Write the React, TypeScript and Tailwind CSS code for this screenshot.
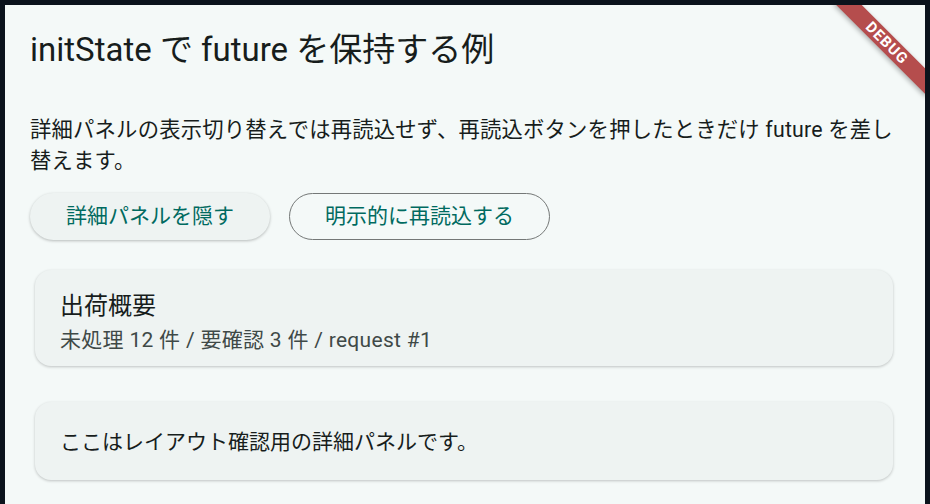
export default function App() {
  return (
    <div className="h-[504px] w-[930px] overflow-hidden bg-[#0b131c] px-[5px] pt-[5px] font-['Roboto','Noto_Sans_CJK_JP',sans-serif]">
      <div className="relative h-full overflow-hidden bg-[#f4f9f8] px-[25px] pt-[25px] text-[#171d1c]">
        <h1 className="text-[33px] leading-[40px]">initState で future を保持する例</h1>

        <p className="mt-[44px] text-[21.33px] leading-[31px] tracking-[0.2px]">
          詳細パネルの表示切り替えでは再読込せず、再読込ボタンを押したときだけ future を差し替えます。
        </p>

        <div className="mt-[17px] flex gap-[19px]">
          <button className="h-[47px] w-[240px] rounded-full bg-[#eef3f2] text-[21px] text-[#006a60] shadow-[0_1px_3px_rgba(0,0,0,0.25)]">
            詳細パネルを隠す
          </button>
          <button className="h-[47px] w-[261px] rounded-full border border-[#747877] text-[21px] text-[#006a60]">
            明示的に再読込する
          </button>
        </div>

        <div className="mt-[30px] ml-[5px] mr-[7px] rounded-2xl bg-[#eef3f2] px-[25px] pt-[19px] pb-[9px] shadow-[0_1px_3px_rgba(0,0,0,0.22)]">
          <div className="text-[24px] leading-[34px]">出荷概要</div>
          <div className="text-[21px] leading-[34px] tracking-[0.3px] text-[#3f4947]">未処理 12 件 / 要確認 3 件 / request #1</div>
        </div>

        <div className="mt-[36px] ml-[5px] mr-[7px] rounded-2xl bg-[#eef3f2] px-[25px] pt-[25px] pb-[23px] shadow-[0_1px_3px_rgba(0,0,0,0.22)]">
          <div className="text-[21px] leading-[30px]">ここはレイアウト確認用の詳細パネルです。</div>
        </div>

        <div className="absolute left-[817px] top-[29px] flex h-[18px] w-[130px] rotate-45 items-center justify-center bg-[#b54d4d] shadow-[0_2px_5px_rgba(0,0,0,0.3)]">
          <span className="text-[15px] font-bold leading-none tracking-[1px] text-white">DEBUG</span>
        </div>
      </div>
    </div>
  );
}
